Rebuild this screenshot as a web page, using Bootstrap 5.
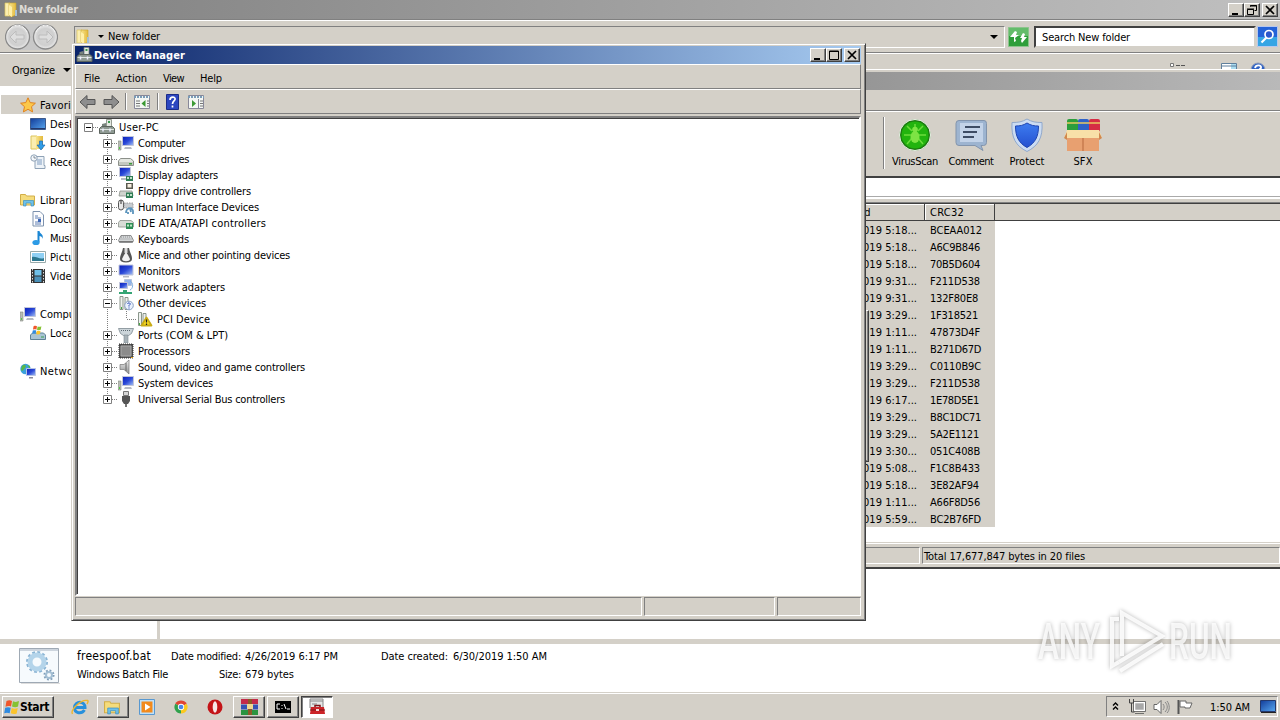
<!DOCTYPE html>
<html lang="en" data-bs-theme="light">
<head>
<meta charset="UTF-8">
<title>New folder</title>
<meta name="viewport" content="width=device-width, initial-scale=1.0">
<link href="https://cdn.jsdelivr.net/npm/bootstrap@5.3.2/dist/css/bootstrap.min.css" rel="stylesheet">
<style>
  :root {--face: #d4d0c8; --shade: #808080; --dark: #404040;}
  html, body {height: 100%;overflow: hidden;}
  body {font: 11px/13px "DejaVu Sans Condensed", "DejaVu Sans", sans-serif;color: #000;background: #fff;}
  svg {display: block;flex: none;}
  span {white-space: pre;}
  .desk {width: 1280px;height: 720px;}
  .face {background: var(--face);}
  .win {position: absolute;}
  .raised {border: 1px solid;border-color: #fff var(--dark) var(--dark) #fff;box-shadow: inset -1px -1px var(--shade);background: var(--face);}
  .sunk {border: 1px solid;border-color: var(--shade) #fff #fff var(--shade);}
  .title {font-weight: bold;color: #fff;height: 18px;}
  .ctl {width: 16px;height: 14px;}
  .ctl svg {margin: auto;}
  .ctl + .ctl + .ctl {margin-left: 2px;}
  /* explorer */
  .ex-title {background: linear-gradient(90deg, #808080, #c0c0c0);color: #dedbd5;height: 19px;padding: 0 2px 0 3px;}
  .ex-addr {height: 34px;border-top: 1px solid var(--shade);border-bottom: 1px solid var(--shade);box-shadow: inset 0 1px #fff;padding: 1px 1px 0 5px;}
  .ex-tools {height: 33px;border-top: 1px solid #fff;padding: 0 14px 0 12px;}
  .combo {width: 931px;height: 22px;margin-left: 16px;padding: 0 6px 0 0;}
  .crumb {margin: 0 4px 0 7px;}
  .search {width: 222px;height: 22px;margin-left: 5px;padding: 1px 0 0 6px;background: #fff;border: 2px solid;border-color: var(--dark) var(--face) var(--face) var(--dark);}
  .side {width: 157px;padding-top: 9px;}
  .side > div {height: 19px;gap: 4px;padding-top: 1px;}
  .side .lvl0 {padding-left: 19px;margin-left: 1px;}
  .side .lvl1 {padding-left: 30px;}
  .split {width: 3px;}
  .details {border-top: 5px solid var(--face);box-sizing: content-box;height: 48px;}
  .details .info {padding-top: 6px;gap: 5px;}
  .big {font-size: 12px;}
  /* archiver */
  .rar {left: 600px;top: 69px;width: 680px;height: 500px;border-top: 1px solid #fff;border-bottom: 2px solid var(--dark);overflow: hidden;}
  .rar-title {height: 18px;margin-top: 2px;background: linear-gradient(90deg, #808080, #b9b9b9);}
  .rar-menu {height: 21px;border-bottom: 1px solid var(--shade);}
  .rar-tools {height: 65px;border-top: 1px solid #fff;padding-left: 283px;}
  .rar-sep {width: 2px;height: 52px;margin: 5px 2px 0 0;border-left: 1px solid var(--shade);border-right: 1px solid #fff;}
  .rar-btn {width: 56px;padding-top: 6px;gap: 3px;}
  .rar-path {height: 20px;border-top: 2px solid var(--dark);background: #fff;}
  .rar-gap {height: 7px;border-top: 1px solid #aaa;box-shadow: inset 0 2px #fff;border-bottom: 1px solid var(--shade);}
  .rar-head {height: 18px;border-top: 1px solid var(--dark);border-bottom: 1px solid var(--dark);}
  .rar-head > div {border-right: 1px solid var(--dark);box-shadow: inset 1px 1px #fff;padding-top: 2px;}
  .col-a {width: 325px;}
  .col-b {width: 70px;padding-left: 5px;}
  .rar-row {height: 17px;width: 395px;padding-top: 2px;}
  .rar-row .col-a {padding-right: 8px;}
  .rar-stat {height: 24px;padding: 3px 0 3px;border-top: 1px solid #fff;box-shadow: 0 -1px var(--face), 0 -2px #fff;}
  .rar-total {margin-left: 2px;padding: 2px 0 0 1px;}
  .edge {left: 855px;top: 310px;width: 14px;height: 152px;}
  /* device manager */
  .dm {left: 71px;top: 43px;width: 795px;height: 578px;border: 1px solid;border-color: var(--face) var(--dark) var(--dark) var(--face);box-shadow: inset 1px 1px #fff, inset -1px -1px var(--shade);padding: 2px 4px 3px 3px;}
  .dm-title {background: linear-gradient(90deg, #0a246a, #a6caf0);padding: 0 1px 0 1px;}
  .dm-bar {height: 25px;border: 1px solid;border-color: #fff var(--shade) var(--shade) #fff;}
  .dm-menu {padding: 3px 0 0 8px;gap: 16px;}
  .dm-bar i {width: 2px;height: 17px;border-left: 1px solid var(--shade);border-right: 1px solid #fff;}
  .dm-tree {margin-top: 2px;height: 480px;background: #fff;border: 2px solid;border-color: var(--shade) #fff #fff var(--shade);box-shadow: inset 1px 1px var(--dark);padding: 1px 0 0 7px;}
  .node {height: 16px;}
  .node svg.ico {margin-right: 4px;}
  .guide {width: 19px;height: 16px;}
  .guide.short {width: 15px;}
  .dm-stat {margin-top: 1px;height: 19px;gap: 2px;}
  .pane-a {width: 567px;}
  .pane-b {width: 131px;}
  /* taskbar */
  .bar {height: 28px;border-top: 1px solid var(--face);box-shadow: inset 0 1px #fff;padding: 3px 2px 0;}
  .start {width: 52px;height: 22px;font-weight: bold;font-size: 12px;}
  .task {width: 32px;height: 22px;}
  .task + .task {margin-left: 2px;}
  .task.on {background: #fff;border-color: var(--dark) #fff #fff var(--dark);box-shadow: inset 1px 1px var(--shade);}
  .tray {width: 172px;height: 21px;padding: 0 1px 0 4px;}
  .clock {margin-left: 16px;padding-top: 1px;}
  .logo-any {position: absolute;left: 1030px;top: 602px;overflow: visible;}
</style>
</head>
<body>
<svg width="0" height="0" class="position-absolute">
  <defs>
    <linearGradient id="gBlue" x1="0" y1="0" x2="1" y2="1"><stop offset="0" stop-color="#0a1fb8"/><stop offset=".5" stop-color="#2a48d8"/><stop offset="1" stop-color="#a8c4f4"/></linearGradient>
    <linearGradient id="gDesk" x1="0" y1="0" x2="1" y2="1"><stop offset="0" stop-color="#123c9a"/><stop offset="1" stop-color="#58a8f0"/></linearGradient>
    <linearGradient id="gGray" x1="0" y1="0" x2="0" y2="1"><stop offset="0" stop-color="#f2f2f2"/><stop offset="1" stop-color="#8d8f8f"/></linearGradient>
    <linearGradient id="gFold" x1="0" y1="0" x2="1" y2="0"><stop offset="0" stop-color="#f8e48c"/><stop offset="1" stop-color="#e3b93c"/></linearGradient>
    <linearGradient id="gShield" x1="0" y1="0" x2="0" y2="1"><stop offset="0" stop-color="#3d7cf0"/><stop offset="1" stop-color="#2450d0"/></linearGradient>
    <radialGradient id="gNav"><stop offset="0" stop-color="#d8d8d8"/><stop offset=".7" stop-color="#cfcfcf"/><stop offset="1" stop-color="#ececec"/></radialGradient>
    <symbol id="folder" viewBox="0 0 16 16"><path d="M2 1h5v13H2z" fill="#fbeeb0" stroke="#dcc45c" stroke-width=".7"/><path d="M6 1h7v12l-5 2-2-2z" fill="url(#gFold)" stroke="#c9a42e" stroke-width=".6"/><path d="M6 3l3 2v10l-3-2z" fill="#fff0a8"/><path d="M12 8h2v6h-2z" fill="#a4bfd6"/></symbol>
    <symbol id="pc" viewBox="0 0 16 16"><path d="M0 6h3v9H0z" fill="#b8bcb6" stroke="#85897f" stroke-width=".6"/><path d="M1 12h1v2H1z" fill="#5c4"/><path d="M4.500 1.500h11v9h-11z" fill="url(#gBlue)" stroke="#c2c6da"/><path d="M7 12h6l1 2H6z" fill="#b6bac4"/></symbol>
    <symbol id="monitor" viewBox="0 0 16 16"><path d="M1 2h14v10H1z" fill="url(#gBlue)" stroke="#c2c6da"/><path d="M5 13h6v1.500H5z" fill="#b6bac4"/></symbol>
    <symbol id="disk" viewBox="0 0 16 16"><path d="M2.500 7.500h10l3 2.500v4.500H.5V10z" fill="#e4e7e1" stroke="#8c908a"/><path d="M1 11h14v3H1z" fill="#c4c8c0"/><path d="M11 12h3v1.500h-3z" fill="#3a9a3a"/></symbol>
    <symbol id="display" viewBox="0 0 16 16"><path d="M1.500.5h11v9h-11z" fill="url(#gBlue)" stroke="#c2c6da"/><path d="M3 11h6v2H3z" fill="#b6bac4"/><path d="M8 9h7v5H8z" fill="#2f7d55"/><path d="M9 10h2v2H9zM12 10h2v2h-2z" fill="#bfe0c8"/></symbol>
    <symbol id="floppy" viewBox="0 0 16 16"><path d="M8 0h7v6H8z" fill="#5a5a50"/><path d="M9.500 1h4v3.500h-4z" fill="#f7eee0"/><path d="M2 8h12l1 5H1z" fill="#d0d4ce" stroke="#8c908a" stroke-width=".8"/><path d="M8 9.500h7v5.500H8z" fill="#2f7d55"/><path d="M9 11h2v2H9zM12 11h2v2h-2z" fill="#bfe0c8"/></symbol>
    <symbol id="hid" viewBox="0 0 16 16"><rect x=".5" y="1" width="5" height="10" rx="2.500" fill="#e8e8e8" stroke="#555"/><path d="M3 1v4" stroke="#333"/><path d="M6 4h9v5H6z" fill="#c8ccd0" stroke="#888" stroke-width=".8" stroke-dasharray="1.500 1"/><path d="M8 14c0-5 6-7 7-2v3M10 13v2M12 9l1 4" stroke="#5d95bd" stroke-width="1.800" fill="none"/></symbol>
    <symbol id="ide" viewBox="0 0 16 16"><path d="M2 5.500h11l2.500 2V12H.5V7.500z" fill="#d8dcd6" stroke="#8c908a" stroke-width=".8"/><path d="M8 8h7v6H8z" fill="#2f8d55"/><path d="M9 9.500h2v2H9zM12 9.500h2v2h-2z" fill="#bfe8c8"/></symbol>
    <symbol id="keyb" viewBox="0 0 16 16"><path d="M3 4.500h10l2.500 5-1 2h-13l-1-2z" fill="#d3d6d7" stroke="#77797a" stroke-width=".8"/><path d="M3 6h10M2.500 8h11" stroke="#909294" stroke-dasharray="1 1"/><path d="M1 10.500h14" stroke="#777"/></symbol>
    <symbol id="mouse" viewBox="0 0 16 16"><path d="M5 1c-1 5-3 7-3 11 0 2 2 3.500 6 3.500s6-1.500 6-3.500c0-4-2-6-3-11z" fill="#555"/><path d="M6 8l2-3 2 3 2 4c0 3-8 3-8 0z" fill="#f2f2f2"/><path d="M6.500 1h3v5h-3z" fill="#ddd"/></symbol>
    <symbol id="net" viewBox="0 0 16 16"><path d="M6.500.5h7v6h-7z" fill="#93b4ec" stroke="#b8c4da"/><path d="M1.500 3.500h8v6h-8z" fill="url(#gBlue)" stroke="#c2c6da"/><path d="M12 2c4 2 3 8 0 9" stroke="#7fb0e0" fill="none"/><path d="M5 11h4v2h5v2H1v-2h4z" fill="#35a574"/></symbol>
    <symbol id="other" viewBox="0 0 16 16"><path d="M2 1.500h3v13H2zM7 2.500h3v12H7z" fill="#eef1ee" stroke="#7f8b80" stroke-width=".9"/><path d="M3 12h1v2H3z" fill="#4a4"/><circle cx="11" cy="10.500" r="4.300" fill="#eaf1fc" stroke="#8aa0c4"/><path d="M9.500 9c.5-2 3.500-1 2.500.5l-1 1v1M11 12.500v1" stroke="#2747b4" fill="none"/></symbol>
    <symbol id="warn" viewBox="0 0 16 16"><path d="M1.500 1.500h3v13h-3zM6 2.500h3v12H6z" fill="#eef1ee" stroke="#7f8b80" stroke-width=".9"/><path d="M2 12h1v2H2z" fill="#4a4"/><path d="M9.500 6.500l5 8h-10z" fill="#f7d920" stroke="#c9ab14" stroke-linejoin="round" stroke-width="1.800"/><path d="M9.500 8.500v3M9.500 12.500v1.500" stroke="#222" stroke-width="1.200"/></symbol>
    <symbol id="port" viewBox="0 0 16 16"><path d="M.5 1.500h15l-2 5-3 2h-5l-3-2z" fill="#ccd5da" stroke="#7d8a92" stroke-width=".8"/><path d="M3 3.500h10" stroke="#5c6870" stroke-dasharray="1 1"/><path d="M6 8h4v8H6z" fill="#a8b2b8" stroke="#7d8a92" stroke-width=".6"/></symbol>
    <symbol id="cpu" viewBox="0 0 16 16"><path d="M1 1h14v14H1z" fill="#555" stroke="#333" stroke-dasharray="1 1"/><path d="M3 3h10v10H3z" fill="#8b8b8b" stroke="#aaa"/><path d="M13 14h2v1h-2z" fill="#e0a020"/></symbol>
    <symbol id="sound" viewBox="0 0 16 16"><path d="M2 5.500h4l5-4.500v14l-5-4.500H2z" fill="url(#gGray)" stroke="#777" stroke-width=".7"/><path d="M8 4v8" stroke="#666"/></symbol>
    <symbol id="usb" viewBox="0 0 16 16"><path d="M5.500.5h5v4h-5z" fill="#d8d8d8" stroke="#777"/><path d="M4 5h8v5l-2 3H6l-2-3z" fill="#555"/><path d="M7 13h2v3H7z" fill="#777"/></symbol>
    <symbol id="dmgr" viewBox="0 0 16 16"><path d="M7.500.5h5v9h-5z" fill="#e4e8e2" stroke="#7b837a" stroke-width=".8"/><path d="M9 2h2v2H9z" fill="#3b9a50"/><path d="M3 5l4-1v4H3z" fill="#77837c"/><path d="M.5 9.500l2-2h11l2 2v5H.5z" fill="#8e9992" stroke="#5c645e"/><path d="M1 10.500h14" stroke="#dfe4e0"/><path d="M4 9.500v3M11 9.500v3" stroke="#eef" stroke-width="1.500"/></symbol>
    <symbol id="star" viewBox="0 0 16 16"><path d="M8 .8l2.200 4.800 5.200.6-3.900 3.500 1.100 5.200L8 12.300l-4.600 2.600 1.100-5.200L.6 6.200l5.200-.6z" fill="#fcc84a" stroke="#e0821e"/></symbol>
    <symbol id="desktop" viewBox="0 0 16 16"><path d="M.5 2.500h15v11H.5z" fill="url(#gDesk)" stroke="#3d5a8c"/><path d="M1 12h14v1H1z" fill="#24386c"/></symbol>
    <symbol id="down" viewBox="0 0 16 16"><path d="M1 1h6v13H1z" fill="#fbeeb0" stroke="#dcc45c"/><path d="M6 1h7v13H6z" fill="url(#gFold)"/><path d="M9.500 6h3v4H15l-4 5-4-5h2.500z" fill="#2f9ce8" stroke="#1b6cb4" stroke-width=".7"/></symbol>
    <symbol id="recent" viewBox="0 0 16 16"><path d="M5 2.500h9v9h1v3H5z" fill="#eef3f8" stroke="#8fa2b6"/><path d="M7 6h5M7 8h5M7 10h5" stroke="#7f9cc0"/><circle cx="4" cy="4" r="3.200" fill="#f4f7fa" stroke="#8fa2b6"/><path d="M4 2v2h2" stroke="#567" fill="none" stroke-width=".7"/></symbol>
    <symbol id="lib" viewBox="0 0 16 16"><path d="M.5 2.500h5l1 1.500h8v9H.5z" fill="#f5dc7c" stroke="#d2ae48"/><path d="M3.500 14V8.500h10V14h-2.500v-3H6v3z" fill="#6ec1ea" stroke="#3d8fc0" stroke-width=".7"/></symbol>
    <symbol id="doc" viewBox="0 0 16 16"><path d="M3 .5h7l3.500 3.500v11H3z" fill="#fdfdfe" stroke="#7d92ae"/><path d="M5 5h3M5 7h6M5 11h6M5 13h6" stroke="#5f7fb4"/><path d="M8 8h3v3H8z" fill="#3d68b8"/></symbol>
    <symbol id="music" viewBox="0 0 16 16"><path d="M8.500 1v11" stroke="#1b87d4" stroke-width="2"/><path d="M9 1c1 3 5 3 3.500 8 0-2-1.500-3-3.500-3z" fill="#1b87d4"/><ellipse cx="6" cy="12.500" rx="3.600" ry="2.600" fill="#2c9be6"/></symbol>
    <symbol id="pict" viewBox="0 0 16 16"><path d="M.5 2.500h15v11H.5z" fill="#fff" stroke="#9aa"/><path d="M2 4h12v8H2z" fill="#8fd0f4"/><path d="M2 8c4-1 8 3 12 1v3H2z" fill="#2c7890"/></symbol>
    <symbol id="video" viewBox="0 0 16 16"><path d="M1 1h14v14H1z" fill="#333"/><path d="M2.500 1v14M13.500 1v14" stroke="#ddd" stroke-dasharray="1.500 1.500"/><path d="M4.500 2h7v5.500h-7z" fill="#6fc0e8"/><path d="M4.500 8.500h7V14h-7z" fill="#4a90b8"/></symbol>
    <symbol id="flag" viewBox="0 0 16 16"><path d="M2.500 2C5 .8 6.500 1.200 8 2L7 7.500c-2-.8-3.500-.6-5.500.2z" fill="#f0562a"/><path d="M9 2.300c2 .9 4 .8 6-.2l-1 5.500c-2 .9-4 .8-6-.2z" fill="#86c232"/><path d="M1.200 8.800c2-.8 3.800-.8 5.500 0l-1 5.500c-2-.8-3.500-.8-5.500 0z" fill="#2f8be0"/><path d="M7.700 9c2 .9 4 .8 6 0l-1 5.400c-2 .9-4 .8-6-.2z" fill="#fbc42c"/></symbol>
    <symbol id="drive" viewBox="0 0 16 16"><path d="M.5 10l2-2h11l2 2v4.500H.5z" fill="#a9c4d4" stroke="#5f8296"/><path d="M11 11.500h3v1h-3z" fill="#3ba050"/><use href="#flag" x="2" y="0" width="10" height="10"/></symbol>
    <symbol id="netw" viewBox="0 0 16 16"><circle cx="5.500" cy="6" r="5.200" fill="#3aa0dc"/><path d="M2 3c3-3 5 0 3 2s-2 4-4 2zM7 2l3 1v3z" fill="#58b848"/><path d="M6.500 5.500h9v7h-9z" fill="url(#gBlue)" stroke="#b8c4e4"/><path d="M9 14h4v1.500H9z" fill="#889"/></symbol>
  </defs>
</svg>

<div class="desk position-relative d-flex flex-column">
  <!-- explorer window -->
  <div class="flex-grow-1 d-flex flex-column">
	<div class="title ex-title d-flex align-items-center">
	  <svg width="16" height="16"><use href="#folder"/></svg>
	  <span class="flex-grow-1"><span data-w="59">New folder</span></span>
	  <div class="ctl raised d-flex"><svg width="10" height="10"><path d="M1 8h6v2H1z"/></svg></div>
	  <div class="ctl raised d-flex"><svg width="10" height="10"><path d="M3.500 1.500v-1h6v5h-2M3 1h7M.5 4.500h6v5h-6zM0 4h7" fill="none" stroke="#000"/></svg></div>
	  <div class="ctl raised d-flex"><svg width="10" height="10"><path d="M1 1l8 8M9 1l-8 8" stroke="#000" stroke-width="1.700"/></svg></div>
	</div>
	<div class="face ex-addr d-flex align-items-center">
	  <svg width="53" height="28">
		<path d="M12 1h29v26H12z" fill="#c8c8c8"/>
		<g fill="url(#gNav)" stroke="#8a8a8a" stroke-width="1.300"><circle cx="12.500" cy="14" r="12"/><circle cx="40.500" cy="14" r="12"/></g>
		<g fill="#dedede" stroke="#bcbcbc"><path d="M5 14l6-6v4h8v4h-8v4zM48 14l-6-6v4h-8v4h8v4z"/></g>
		<path d="M3 9c4-9 15-9 19 0M31 9c4-9 15-9 19 0" stroke="#f4f4f4" fill="none"/>
	  </svg>
	  <div class="combo sunk d-flex align-items-center">
		<svg width="16" height="18"><use href="#folder"/></svg>
		<svg width="6" height="3" class="crumb"><path d="M0 0h6l-3 3z"/></svg>
		<span class="flex-grow-1"><span data-w="52">New folder</span></span>
		<svg width="8" height="4"><path d="M0 0h8l-4 4z"/></svg>
	  </div>
	  <svg width="21" height="20" style="margin-left:3px"><path d="M.5.5h20v19H.5z" fill="#2f9e3a" stroke="#8cc48c"/><path d="M1 1h19v8H1z" fill="#64bc6a"/><path d="M2 10l5-6 2 1-1 3h3l-4 3 1 3-2 1v-5zM19 10l-5 6-1-2 1-3h-2l3-5 2 1-1 3z" fill="#fff"/></svg>
	  <div class="search d-flex align-items-center"><span data-w="88">Search New folder</span></div>
	  <svg width="21" height="21" style="margin-left:1px"><path d="M.5.5h20v20H.5z" fill="#2463d8" stroke="#b8c8ec"/><path d="M1 11h19v9H1z" fill="#35a5e4"/><path d="M9.500 11.500L4.500 16.500" stroke="#fff" stroke-width="2.200"/><circle cx="12" cy="8.500" r="4" fill="#2c58cc" stroke="#fff" stroke-width="1.700"/></svg>
	</div>
	<div class="face ex-tools d-flex align-items-center">
	  <span data-w="43">Organize</span>
	  <svg width="8" height="4" class="ms-2"><path d="M0 0h8l-4 4z"/></svg>
	  <svg width="16" height="16" class="ms-auto"><path d="M.5 1.500h3v3h-3z" fill="#fff" stroke="#777"/><path d="M6 3.500h4M11 3.500h4" stroke="#555"/></svg>
	  <svg width="16" height="16" style="margin:0 13px 0 35px"><path d="M.5 1.500h15v11H.5z" fill="#fff" stroke="#5f7f9c"/><path d="M10 2h5v10h-5z" fill="#a9dcf0"/><path d="M1 4h14" stroke="#5f7f9c"/></svg>
	  <svg width="16" height="18"><circle cx="8" cy="9" r="7" fill="#2f62c4" stroke="#8f9cb8"/><path d="M5 7c1-4 7-3 6 0l-3 3" stroke="#fff" stroke-width="1.800" fill="none"/></svg>
	</div>
	<div class="flex-grow-1 d-flex">
	  <div class="side" id="side"></div>
	  <div class="split face"></div>
	</div>
	<div class="details d-flex">
	  <svg width="42" height="38" style="margin:3px 0 0 18px">
		<path d="M1.500 1.500h39v34h-39z" fill="#f6fafd" stroke="#9fa9b4"/><path d="M2 2h38v2H2z" fill="#cdd5de"/>
		<circle cx="19" cy="15" r="9" fill="none" stroke="#8ab4d4" stroke-width="4" stroke-dasharray="2.600 2.112"/><circle cx="19" cy="15" r="7" fill="none" stroke="#b4d4ea" stroke-width="5"/>
		<circle cx="31" cy="28" r="4.300" fill="none" stroke="#7f9db8" stroke-width="2.500" stroke-dasharray="1.700 1.670"/><circle cx="31" cy="28" r="3" fill="none" stroke="#a4bfd4" stroke-width="2"/>
		<path d="M3 36.500h39" stroke="#ddd"/>
	  </svg>
	  <div class="info d-flex flex-column align-items-start" style="margin-left:17px;width:94px"><span class="big" data-w="74">freespoof.bat</span><span data-w="91">Windows Batch File</span></div>
	  <div class="info d-flex flex-column align-items-end" style="width:70px"><span data-w="70">Date modified:</span><span data-w="22">Size:</span></div>
	  <div class="info d-flex flex-column align-items-start" style="margin-left:4px;width:136px"><span data-w="93">4/26/2019 6:17 PM</span><span data-w="49">679 bytes</span></div>
	  <div class="info d-flex align-items-start"><span data-w="67">Date created:</span><span data-w="94">6/30/2019 1:50 AM</span></div>
	</div>
  </div>

  <!-- taskbar -->
  <div class="bar face d-flex">
	<div class="start raised d-flex align-items-center"><svg width="16" height="16" style="margin-left:1px"><use href="#flag"/></svg><span data-w="29">Start</span></div>
	<svg width="18" height="18" viewBox="0 0 18 18" style="margin:2px 8px 0 17px"><path d="M3.500 9.500h10.500c0-7-10-7-10.500 0 0 6 7 7 10 2.500" fill="none" stroke="#2790dc" stroke-width="3"/><path d="M1.500 16C-1 12 10 1 16.500 2.500c1 .5.5 2-.5 3.500" fill="none" stroke="#eeb62c" stroke-width="1.400"/></svg>
	<div class="task raised d-flex"><svg width="18" height="17" class="m-auto"><use href="#lib" width="17" height="17"/></svg></div>
	<svg width="16" height="16" style="margin:3px 18px 0 10px"><path d="M.5.5h15v15H.5z" fill="#bfe0f8" stroke="#5898d0"/><path d="M2.500 2.500h11v11h-11z" fill="#f28a1c"/><path d="M6 4.500l5.500 3.500L6 11.500z" fill="#fff"/></svg>
	<svg width="14" height="14" viewBox="-8 -8 16 16" style="margin:4px 19px 0 1px"><path d="M0 0L-6.500-3.750A7.500 7.500 0 0 1 6.500-3.750z" fill="#e04434"/><path d="M0 0L6.500-3.750A7.500 7.500 0 0 1 0 7.500z" fill="#fbc91e"/><path d="M0 0L0 7.500A7.500 7.500 0 0 1-6.500-3.750z" fill="#2fa14c"/><circle r="3.600" fill="#fff"/><circle r="2.700" fill="#4a86e8"/></svg>
	<svg width="16" height="16" style="margin:3px 10px 0 0"><circle cx="8" cy="8" r="7.500" fill="#c41418"/><ellipse cx="8" cy="8" rx="2.300" ry="5.700" fill="#f7e8e8"/></svg>
	<div class="task raised d-flex"><svg width="17" height="16" class="m-auto"><path d="M0 0h17v5H0z" fill="#c42a4a"/><path d="M0 5.500h17v5H0z" fill="#3452b4"/><path d="M0 11h17v5H0z" fill="#2a9440"/><path d="M7 0h4v16H7z" fill="#8c5a28"/><path d="M6 5h6v5H6z" fill="#f0d890"/></svg></div>
	<div class="task raised d-flex"><svg width="16" height="12" class="m-auto"><path d="M0 0h16v12H0z"/><path d="M5 3H2v5h3M7 4v1M7 7v1M9 3l2 5M12 8h3" stroke="#fff" fill="none"/></svg></div>
	<div class="task raised on d-flex"><svg width="18" height="18" class="m-auto"><path d="M2 1h13v9H2z" fill="#e4e6e6" stroke="#888"/><path d="M2 3h13M4 6h5" stroke="#888"/><path d="M7 9V7.500h5V9" stroke="#7c1518" stroke-width="1.500" fill="none"/><path d="M3 9h13l1 7H2z" fill="#cc2428"/><path d="M2 12h15" stroke="#7c1518"/><path d="M8 11h3v2H8z" fill="#f4dada"/></svg></div>
	<div class="tray sunk d-flex align-items-center ms-auto">
	  <svg width="9" height="12"><path d="M2 4.500L4.500 2 7 4.500M2 8.500L4.500 6 7 8.500" fill="none" stroke="#000" stroke-width="1.400"/></svg>
	  <svg width="17" height="17" style="margin-left:9px"><path d="M5.500 4.500h10v8h-10z" fill="#a8a8a8" stroke="#fff" stroke-width="1.500"/><path d="M4.500 3.500h12v10h-12zM6 15.500h9" fill="none" stroke="#555" stroke-width=".8"/><path d="M.5 1v4h4V1M2.500 5v9h3" stroke="#444" fill="none"/></svg>
	  <svg width="17" height="16" style="margin-left:7px"><path d="M1 5.500h3l4-4v13l-4-4H1z" fill="#fff" stroke="#666"/><path d="M10 5c1.500 2 1.500 4 0 6M12 3c3 3 3 7 0 10M14 2c3 4 3 9 0 12" stroke="#888" fill="none"/></svg>
	  <svg width="17" height="16" style="margin-left:7px"><path d="M1.500 1v14" stroke="#555" stroke-width="2"/><path d="M3 2h6v2h6l-2 5H8V8H3z" fill="#fff" stroke="#666"/></svg>
	  <span data-w="40" class="clock">1:50 AM</span>
	  <svg width="16" height="14" class="ms-auto"><path d="M.5.5h15v11H.5z" fill="url(#gDesk)" stroke="#24386c"/><path d="M1 12.500h15" stroke="#222"/></svg>
	</div>
  </div>

  <!-- archiver window -->
  <div class="win rar face d-flex flex-column">
	<div class="rar-title"></div>
	<div class="rar-menu"></div>
	<div class="rar-tools d-flex">
	  <div class="rar-sep"></div>
	  <div class="rar-btn d-flex flex-column align-items-center"><svg width="34" height="34" viewBox="0 0 34 34"><circle cx="17" cy="17" r="15.500" fill="#1c7a10" stroke="#e9f0e6"/><circle cx="17" cy="17" r="13.500" fill="#22b40e"/><path d="M9 8l5 5M25 8l-5 5M6 17h7M28 17h-7M9 26l5-6M25 26l-5-6M17 6v4" stroke="#6cdc3c" stroke-width="1.500"/><ellipse cx="17" cy="19" rx="4.500" ry="6" fill="#7ee444"/><circle cx="17" cy="11.500" r="2.800" fill="#7ee444"/></svg><span data-w="46">VirusScan</span></div>
	  <div class="rar-btn d-flex flex-column align-items-center"><svg width="34" height="34" viewBox="0 0 34 34"><path d="M5 2.500h25q2.500 0 2.500 3v19q0 3-3 3H27l2 5-8-5H5q-3 0-3-3v-19q0-3 3-3z" fill="#9db4d0" stroke="#8294ac"/><path d="M6 5h23v19H6z" fill="#c3d3e8"/><path d="M11 9h15M9 14h14M9 19h11" stroke="#3d4c64" stroke-width="1.800"/></svg><span data-w="45">Comment</span></div>
	  <div class="rar-btn d-flex flex-column align-items-center"><svg width="34" height="34" viewBox="0 0 34 34"><path d="M17 1c5 3 9 3.500 15 3.500C33 20 28 28 17 33.500 6 28 1 20 2 4.500 8 4.500 12 4 17 1z" fill="#ccdcf2" stroke="#90a8cc"/><path d="M17 5c4 2.500 7 3 11.500 3C28.500 19 25 25 17 29.500 9 25 5.500 19 5.500 8 10 8 13 7.500 17 5z" fill="url(#gShield)" stroke="#1e44b0"/></svg><span data-w="35">Protect</span></div>
	  <div class="rar-btn d-flex flex-column align-items-center"><svg width="40" height="34" viewBox="0 0 40 34"><rect x="4" y="1" width="11" height="13" rx="2" fill="#2c9e3c"/><rect x="15" y="1" width="11" height="13" rx="2" fill="#2f62c8"/><rect x="26" y="1" width="11" height="13" rx="2" fill="#d62c44"/><path d="M4 5h33" stroke="#e8c860" stroke-width="1.500"/><path d="M4 15h32v18H4z" fill="#e8a070"/><path d="M20 20v13" stroke="#b8683c"/><path d="M4 12h32l3 8H1z" fill="#f8e0a8"/><path d="M1 20l3-6v8zM39 20l-3-6v8z" fill="#d08850"/></svg><span data-w="19">SFX</span></div>
	</div>
	<div class="rar-path"></div>
	<div class="rar-gap"></div>
	<div class="rar-head d-flex">
	  <div class="col-a d-flex"><span style="margin-left:225px" data-w="46">Modified</span></div>
	  <div class="col-b d-flex"><span data-w="34">CRC32</span></div>
	</div>
	<div class="bg-white flex-grow-1" id="rows"></div>
	<div class="rar-stat face d-flex">
	  <div class="sunk" style="width:320px"></div>
	  <div class="rar-total sunk flex-grow-1 d-flex align-items-center"><span data-w="161">Total 17,677,847 bytes in 20 files</span></div>
	</div>
  </div>
  <div class="win edge raised"></div>

  <!-- device manager window -->
  <div class="win dm face">
	<div class="title dm-title d-flex align-items-center">
	  <svg width="18" height="16"><use href="#dmgr" width="17" height="16"/></svg>
	  <span class="flex-grow-1"><span data-w="91">Device Manager</span></span>
	  <div class="ctl raised d-flex"><svg width="10" height="10"><path d="M1 8h6v2H1z"/></svg></div>
	  <div class="ctl raised d-flex"><svg width="10" height="10"><path d="M.5 1h9v8.500h-9zM0 1.500h10" fill="none" stroke="#000"/></svg></div>
	  <div class="ctl raised d-flex"><svg width="10" height="10"><path d="M1 1l8 8M9 1l-8 8" stroke="#000" stroke-width="1.700"/></svg></div>
	</div>
	<div class="dm-bar dm-menu d-flex align-items-center">
	  <span data-w="16">File</span>
	  <span data-w="31">Action</span>
	  <span data-w="21">View</span>
	  <span data-w="22">Help</span>
	</div>
	<div class="dm-bar d-flex align-items-center" style="padding-left:3px">
	  <svg width="18" height="16"><path d="M1 8l7-6.500v4h8v5H8v4z" fill="#8e8e8e" stroke="#555"/></svg>
	  <svg width="18" height="16" style="margin:0 5px"><path d="M17 8l-7-6.500v4H2v5h8v4z" fill="#8e8e8e" stroke="#555"/></svg>
	  <i></i>
	  <svg width="16" height="14" style="margin:1px 7px 0"><path d="M.5.5h15v13H.5z" fill="#f4f7f4" stroke="#889"/><path d="M0 2h16" stroke="#7a9cb8" stroke-dasharray="2 1" stroke-width="2"/><path d="M2 6h4M2 8.500h4M2 11h4M13 6h2M13 8.500h2M13 11h2" stroke="#777"/><path d="M11.500 5v7L7.500 8.500z" fill="#3b9a34"/></svg>
	  <i></i>
	  <svg width="13" height="16" style="margin:0 9px 0 7px"><path d="M.5.5h12v15H.5z" fill="#2c46c0" stroke="#1c2c88"/><path d="M4 6c0-4 6-3.500 5-.5C8.500 7 6.500 7 6.500 10M6.500 11.500v2" stroke="#fff" stroke-width="1.700" fill="none"/></svg>
	  <svg width="16" height="14" style="margin-top:1px"><path d="M.5.5h15v13H.5z" fill="#f4f7f4" stroke="#889"/><path d="M0 2h16" stroke="#7a9cb8" stroke-dasharray="2 1" stroke-width="2"/><path d="M10.500 4v9" stroke="#889"/><path d="M12 6h3M12 8.500h3M12 11h3" stroke="#777"/><path d="M4 5v7l4-3.500z" fill="#3b9a34"/></svg>
	</div>
	<div class="dm-tree" id="tree"></div>
	<div class="dm-stat d-flex">
	  <div class="pane-a sunk"></div>
	  <div class="pane-b sunk"></div>
	  <div class="sunk flex-grow-1"></div>
	</div>
  </div>

  <svg class="logo-any" width="240" height="90" viewBox="0 0 240 90">
	<g style="filter:drop-shadow(0 0 2px rgba(0,0,0,.34))" fill="#fff" fill-opacity=".8">
	  <text x="8" y="57" font-family="Roboto, sans-serif" font-size="50" font-weight="500" textLength="62" lengthAdjust="spacingAndGlyphs">ANY</text>
	  <text x="139" y="57" font-family="Roboto, sans-serif" font-size="50" font-weight="500" textLength="63" lengthAdjust="spacingAndGlyphs">RUN</text>
	  <g fill="none" stroke="#fff" stroke-opacity=".85" stroke-width="4"><path d="M92 54V11l40 23-43 26"/><path d="M89 17h-7v47l7-4M90 69l43-27"/></g>
	</g>
  </svg>
</div>

<script src="https://cdn.jsdelivr.net/npm/bootstrap@5.3.2/dist/js/bootstrap.bundle.min.js"></script>
<script>
	// [level, icon, label, width]; null leaves an empty line
	const SIDE = [
	  [0,"star","Favorites",47],[1,"desktop","Desktop",42],[1,"down","Downloads",54],[1,"recent","Recent Places",69],null,
	  [0,"lib","Libraries",44],[1,"doc","Documents",54],[1,"music","Music",27],[1,"pict","Pictures",40],[1,"video","Videos",33],null,
	  [0,"pc","Computer",49],[1,"drive","Local Disk (C:)",73],null,
	  [0,"netw","Network",44]
	];
	// [icon, label, width, state]
	const TREE = [
	  ["pc","Computer",47,"+"],["disk","Disk drives",51,"+"],["display","Display adapters",80,"+"],
	  ["floppy","Floppy drive controllers",113,"+"],["hid","Human Interface Devices",121,"+"],
	  ["ide","IDE ATA/ATAPI controllers",128,"+"],["keyb","Keyboards",51,"+"],
	  ["mouse","Mice and other pointing devices",152,"+"],["monitor","Monitors",42,"+"],
	  ["net","Network adapters",87,"+"],["other","Other devices",68,"-"],["warn","PCI Device",53,""],
	  ["port","Ports (COM & LPT)",90,"+"],["cpu","Processors",52,"+"],
	  ["sound","Sound, video and game controllers",167,"+"],["pc","System devices",75,"+"],
	  ["usb","Universal Serial Bus controllers",147,"+"]
	];
	const ROWS = [
	  ["5:18","BCEAA012",52],["5:18","A6C9B846",50],["5:18","70B5D604",50],["9:31","F211D538",50],["9:31","132F80E8",48],
	  ["3:29","1F318521",48],["1:11","47873D4F",50],["1:11","B271D67D",51],["3:29","C0110B9C",51],["3:29","F211D538",50],
	  ["6:17","1E78D5E1",49],["3:29","B8C1DC71",51],["3:29","5A2E1121",49],["3:30","051C408B",50],["5:08","F1C8B433",50],
	  ["5:18","3E82AF94",49],["1:11","A66F8D56",50],["5:59","BC2B76FD",51]
	];

	const icon = name => `<svg class="ico" width="16" height="16"><use href="#${name}"/></svg>`;
	const label = (t, w) => `<span data-w="${w}">${t.replace("&", "&amp;")}</span>`;

	document.getElementById("side").innerHTML = SIDE.map((r, i) => r
	  ? `<div class="d-flex align-items-center lvl${r[0]}${i ? "" : " face"}">${icon(r[1])}${label(r[2], r[3])}</div>`
	  : "<div></div>").join("");

	// one tree cell: dotted line and, for + or -, the expander box
	function guide(state, up, down, dash) {
	  let d = "";
	  if (up) d += "M4.500 0V8";
	  if (down) d += "M4.500 8V16";
	  if (dash) d += "M5 8.500H15";
	  let s = `<svg class="guide${dash ? " short" : ""}"><path d="${d}" stroke="#808080" stroke-dasharray="1 1"/>`;
	  if (state) {
		s += '<path d="M.5 4.500h8v8h-8z" fill="#fff" stroke="#808080"/><path d="M2 8.500h5" stroke="#000"/>';
		if (state === "+") s += '<path d="M4.500 6v5" stroke="#000"/>';
	  }
	  return s + "</svg>";
	}
	const node = (cells, name, text, w) => `<div class="node d-flex align-items-center">${cells}${icon(name)}${label(text, w)}</div>`;
	document.getElementById("tree").innerHTML = node(guide("-", 0, 0, 1), "dmgr", "User-PC", 40) +
	  TREE.map((r, i) => {
		const last = i === TREE.length - 1;
		const cells = r[3] ? guide(r[3], 1, !last, 1) : guide("", 1, 1, 0) + guide("", 1, 0, 1);
		return node(guide("", 0, 0, 0) + cells, r[0], r[1], r[2]);
	  }).join("");

	document.getElementById("rows").innerHTML = ROWS.map(r =>
	  `<div class="rar-row face d-flex align-items-center"><div class="col-a text-end">${label("4/26/2019 " + r[0] + "...", 86)}</div><div class="col-b">${label(r[1], r[2])}</div></div>`).join("");

	// spread the letters of each label over its given width
	document.querySelectorAll("[data-w]").forEach(el => {
	  const now = el.getBoundingClientRect().width;
	  el.style.letterSpacing = ((el.dataset.w - now) / el.textContent.length).toFixed(3) + "px";
	});
</script>
</body>
</html>
